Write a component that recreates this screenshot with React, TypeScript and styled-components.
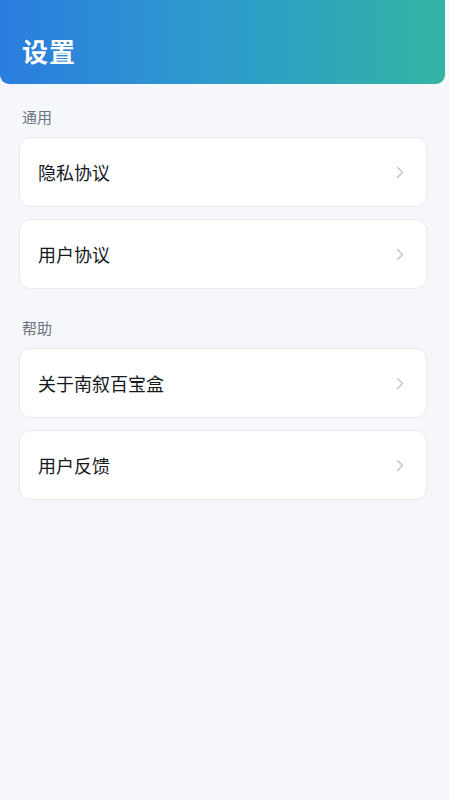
import React from 'react';
import styled, { createGlobalStyle } from 'styled-components';

const GlobalStyle = createGlobalStyle`
  html, body {
    margin: 0;
    padding: 0;
    background: #f5f7fb;
  }
  body {
    font-family: 'Noto Sans CJK SC', 'Noto Sans', sans-serif;
  }
`;

const Page = styled.div`
  min-height: 800px;
  background: #f5f7fb;
`;

const Header = styled.div`
  height: 84px;
  margin-right: 4px;
  background: linear-gradient(90deg, #2b7ddf 0%, #2d9ccb 50%, #33b3a4 100%);
  border-radius: 0 0 9px 9px;
  display: flex;
  align-items: flex-end;
  padding: 0 22px 15px;
  box-sizing: border-box;
`;

const Title = styled.h1`
  margin: 0;
  color: #ffffff;
  font-size: 26px;
  font-weight: 700;
  line-height: 36px;
  letter-spacing: 1px;
`;

const Body = styled.div`
  padding: 22px 22px 0 19px;
  display: flex;
  flex-direction: column;
`;

const Section = styled.section`
  display: flex;
  flex-direction: column;
  gap: 12px;
  margin-bottom: 28px;
`;

const SectionLabel = styled.div`
  color: #6b7280;
  font-size: 15px;
  line-height: 22px;
  padding-left: 3px;
  margin-bottom: -3px;
`;

const Card = styled.div`
  height: 70px;
  background: #ffffff;
  border: 1px solid #e7e9ef;
  border-radius: 11px;
  box-sizing: border-box;
  display: flex;
  align-items: center;
  justify-content: space-between;
  padding: 0 22px 0 18px;
`;

const CardText = styled.span`
  color: #15181d;
  font-size: 18px;
  line-height: 26px;
  font-weight: 400;
`;

const Chevron = () => (
  <svg width="8" height="13" viewBox="0 0 8 13" fill="none">
    <path d="M1.5 1.5 L6.5 6.5 L1.5 11.5" stroke="#c3c7cf" strokeWidth="1.5" strokeLinecap="round" strokeLinejoin="round" />
  </svg>
);

const sections = [
  { label: '通用', items: ['隐私协议', '用户协议'] },
  { label: '帮助', items: ['关于南叙百宝盒', '用户反馈'] },
];

export default function App() {
  return (
    <Page>
      <GlobalStyle />
      <Header>
        <Title>设置</Title>
      </Header>
      <Body>
        {sections.map((s) => (
          <Section key={s.label}>
            <SectionLabel>{s.label}</SectionLabel>
            {s.items.map((it) => (
              <Card key={it}>
                <CardText>{it}</CardText>
                <Chevron />
              </Card>
            ))}
          </Section>
        ))}
      </Body>
    </Page>
  );
}
